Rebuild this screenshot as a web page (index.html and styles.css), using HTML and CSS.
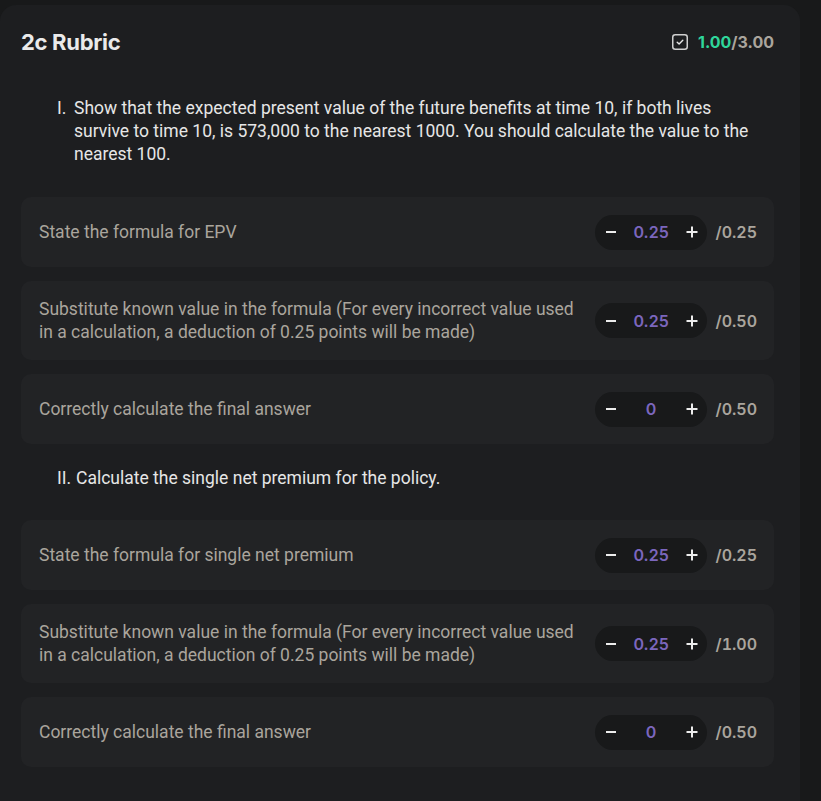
FILE: index.html
```html
<!DOCTYPE html>
<html>
<head>
<meta charset="utf-8">
<link rel="stylesheet" href="styles.css">
</head>
<body>
<div class="card">
  <div class="header">
    <h2 class="title">2c Rubric</h2>
    <div class="score">
      <svg class="check" width="16" height="16" viewBox="0 0 16 16"><rect x="0.75" y="0.75" width="14.5" height="14.5" rx="2.5" fill="none" stroke="#cfcfcf" stroke-width="1.5"/><path d="M5.2 8.2 L7.1 10 L10.8 6.3" fill="none" stroke="#e8e8e8" stroke-width="1.4" stroke-linecap="round" stroke-linejoin="round"/></svg>
      <span class="got">1.00</span><span class="total">/3.00</span>
    </div>
  </div>

  <div class="question">
    <span class="num">I.</span>
    <span class="qtext">Show that the expected present value of the future benefits at time 10, if both lives survive to time 10, is 573,000 to the nearest 1000. You should calculate the value to the nearest 100.</span>
  </div>
  <div class="rows">
    <div class="row">
      <div class="label">State the formula for EPV</div>
      <div class="ctrl"><div class="pill"><svg class="btn" width="12" height="12" viewBox="0 0 12 12"><path d="M1 6 H11" stroke="#ececec" stroke-width="2"/></svg><span class="val">0.25</span><svg class="btn" width="12" height="12" viewBox="0 0 12 12"><path d="M0.5 6 H11.5 M6 0.5 V11.5" stroke="#ececec" stroke-width="2"/></svg></div><span class="max">/0.25</span></div>
    </div>
    <div class="row">
      <div class="label">Substitute known value in the formula (For every incorrect value used in a calculation, a deduction of 0.25 points will be made)</div>
      <div class="ctrl"><div class="pill"><svg class="btn" width="12" height="12" viewBox="0 0 12 12"><path d="M1 6 H11" stroke="#ececec" stroke-width="2"/></svg><span class="val">0.25</span><svg class="btn" width="12" height="12" viewBox="0 0 12 12"><path d="M0.5 6 H11.5 M6 0.5 V11.5" stroke="#ececec" stroke-width="2"/></svg></div><span class="max">/0.50</span></div>
    </div>
    <div class="row">
      <div class="label">Correctly calculate the final answer</div>
      <div class="ctrl"><div class="pill"><svg class="btn" width="12" height="12" viewBox="0 0 12 12"><path d="M1 6 H11" stroke="#ececec" stroke-width="2"/></svg><span class="val">0</span><svg class="btn" width="12" height="12" viewBox="0 0 12 12"><path d="M0.5 6 H11.5 M6 0.5 V11.5" stroke="#ececec" stroke-width="2"/></svg></div><span class="max">/0.50</span></div>
    </div>
  </div>

  <div class="question q2">
    <span class="num">II.</span>
    <span class="qtext">Calculate the single net premium for the policy.</span>
  </div>
  <div class="rows">
    <div class="row">
      <div class="label">State the formula for single net premium</div>
      <div class="ctrl"><div class="pill"><svg class="btn" width="12" height="12" viewBox="0 0 12 12"><path d="M1 6 H11" stroke="#ececec" stroke-width="2"/></svg><span class="val">0.25</span><svg class="btn" width="12" height="12" viewBox="0 0 12 12"><path d="M0.5 6 H11.5 M6 0.5 V11.5" stroke="#ececec" stroke-width="2"/></svg></div><span class="max">/0.25</span></div>
    </div>
    <div class="row">
      <div class="label">Substitute known value in the formula (For every incorrect value used in a calculation, a deduction of 0.25 points will be made)</div>
      <div class="ctrl"><div class="pill"><svg class="btn" width="12" height="12" viewBox="0 0 12 12"><path d="M1 6 H11" stroke="#ececec" stroke-width="2"/></svg><span class="val">0.25</span><svg class="btn" width="12" height="12" viewBox="0 0 12 12"><path d="M0.5 6 H11.5 M6 0.5 V11.5" stroke="#ececec" stroke-width="2"/></svg></div><span class="max">/1.00</span></div>
    </div>
    <div class="row">
      <div class="label">Correctly calculate the final answer</div>
      <div class="ctrl"><div class="pill"><svg class="btn" width="12" height="12" viewBox="0 0 12 12"><path d="M1 6 H11" stroke="#ececec" stroke-width="2"/></svg><span class="val">0</span><svg class="btn" width="12" height="12" viewBox="0 0 12 12"><path d="M0.5 6 H11.5 M6 0.5 V11.5" stroke="#ececec" stroke-width="2"/></svg></div><span class="max">/0.50</span></div>
    </div>
  </div>
</div>
</body>
</html>
```

FILE: styles.css
```css
html, body {
  margin: 0;
  padding: 0;
  background: #18191a;
  font-family: Roboto, "Liberation Sans", sans-serif;
  height: 801px;
  overflow: hidden;
}

.card {
  margin: 5px 21px 0 0;
  background: #1d1e20;
  border-radius: 16px 16px 0 0;
  padding: 25px 26px 40px 21px;
  min-height: 900px;
  box-sizing: border-box;
}

.header {
  display: flex;
  justify-content: space-between;
  align-items: center;
  height: 24px;
}

.title {
  margin: 0;
  font-family: Inter, "Noto Sans", sans-serif;
  font-weight: 700;
  font-size: 22px;
  letter-spacing: -0.3px;
  color: #eaeaea;
}

.score {
  display: flex;
  align-items: center;
  font-family: Inter, sans-serif;
  font-weight: 700;
  font-size: 16px;
}

.check {
  margin-right: 10px;
}

.got { color: #2fd69b; }
.total { color: #aaa59d; }

.question {
  display: flex;
  margin: 43px 0 31px 36px;
  font-size: 17.5px;
  line-height: 23px;
  color: #e6e6e6;
}

.question .num {
  flex: none;
  width: 17px;
}

.qtext {
  max-width: 690px;
}

.q2 {
  margin-top: 23px;
  margin-bottom: 30px;
}

.q2 .num { width: 19px; }

.rows {
  display: flex;
  flex-direction: column;
  gap: 14px;
}

.row {
  display: flex;
  align-items: center;
  justify-content: space-between;
  background: #222325;
  border-radius: 10px;
  min-height: 70px;
  padding: 16.5px 17px 16.5px 18px;
  box-sizing: border-box;
}

.label {
  color: #aaa59d;
  font-size: 17.5px;
  line-height: 23px;
  max-width: 545px;
}

.ctrl {
  display: flex;
  align-items: center;
  flex: none;
}

.pill {
  display: flex;
  align-items: center;
  justify-content: space-between;
  width: 112px;
  height: 35px;
  box-sizing: border-box;
  padding: 0 9px 0 10px;
  background: #18191a;
  border-radius: 18px;
  font-family: Inter, sans-serif;
  font-weight: 600;
  font-size: 16px;
}

.btn {
  flex: none;
  display: block;
}

.val {
  color: #7b66bd;
}

.max {
  margin-left: 9px;
  color: #aaa59d;
  font-family: Inter, sans-serif;
  font-weight: 600;
  font-size: 16px;
  font-variant-numeric: tabular-nums;
}
```
